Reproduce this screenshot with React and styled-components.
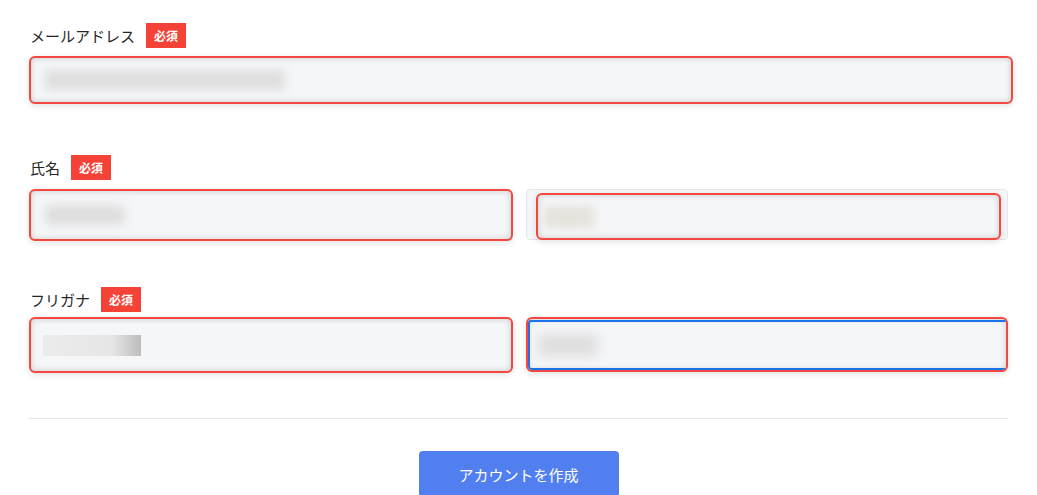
import React from 'react';
import styled, { createGlobalStyle } from 'styled-components';

const GlobalStyle = createGlobalStyle`
  html, body {
    margin: 0;
    padding: 0;
    background: #ffffff;
    font-family: "Noto Sans CJK JP", "Noto Sans", sans-serif;
    color: #333333;
  }
`;

// styled-components
const Page = styled.div`
  width: 980px;
  padding: 22px 0 0 29px;
  display: flex;
  flex-direction: column;
`;

const Section = styled.div`
  display: flex;
  flex-direction: column;
  gap: ${(p) => p.gap || 8}px;
  margin-bottom: ${(p) => p.mb || 0}px;
`;

const LabelRow = styled.div`
  display: flex;
  align-items: center;
  gap: 11px;
  height: 26px;
`;

const Label = styled.span`
  font-size: 15px;
  color: #262626;
  padding-left: 1px;
`;

const Badge = styled.span`
  display: inline-flex;
  align-items: center;
  justify-content: center;
  width: 40px;
  height: 25px;
  background: #f44336;
  color: #ffffff;
  font-size: 12px;
  font-weight: 700;
`;

const Row = styled.div`
  display: grid;
  grid-template-columns: 484px 482px;
  gap: 13px;
`;

const Field = styled.div`
  position: relative;
  box-sizing: border-box;
  height: ${(p) => p.h}px;
  width: ${(p) => p.w || '100%'};
  border: 2px solid #f4473f;
  border-radius: 6px;
  background: #f5f6f8;
  box-shadow: inset 0 0 6px rgba(0, 0, 0, 0.18), 0 2px 6px rgba(0, 0, 0, 0.12);
  display: flex;
  align-items: center;
  padding-left: ${(p) => p.pl || 12}px;
  overflow: hidden;
`;

const FocusedField = styled(Field)`
  &::after {
    content: '';
    position: absolute;
    inset: 1px -2px 0 0;
    border-top: 2px solid #1a73e8;
    border-bottom: 2px solid #1a73e8;
    border-left: 2px solid #1a73e8;
    border-radius: 3px;
    pointer-events: none;
  }
`;

const Frame = styled.div`
  box-sizing: border-box;
  height: 51px;
  border: 1px solid #e4e6ea;
  border-radius: 4px;
  background: #f5f6f8;
  padding: 3px 6px 0 9px;
`;

const Blur = styled.div`
  width: ${(p) => p.w}px;
  height: ${(p) => p.h}px;
  background: ${(p) => p.tone || '#dedede'};
  filter: blur(${(p) => p.blur || 5}px);
  border-radius: 4px;
`;

const Sharp = styled.div`
  width: ${(p) => p.w}px;
  height: ${(p) => p.h}px;
  background: linear-gradient(90deg, #ececec 0%, #e6e6e6 70%, #bdbdbd 100%);
`;

const Divider = styled.hr`
  width: 979px;
  margin: 45px 0 32px 0;
  border: none;
  border-top: 1px solid #e3e3e3;
`;

const ButtonRow = styled.div`
  display: flex;
  justify-content: center;
  width: 979px;
`;

const SubmitButton = styled.button`
  width: 200px;
  height: 46px;
  border: none;
  border-radius: 4px;
  background: #527ff0;
  color: #ffffff;
  font-family: "Noto Sans CJK JP", "Noto Sans", sans-serif;
  font-size: 15px;
  cursor: pointer;
`;

const App = () => {
  return (
    <>
      <GlobalStyle />
      <Page>
        <Section gap={8} mb={50}>
          <LabelRow>
            <Label>メールアドレス</Label>
            <Badge>必須</Badge>
          </LabelRow>
          <Field h={48} w="984px" pl={14}>
            <Blur w={240} h={20} />
          </Field>
        </Section>

        <Section gap={9} mb={45}>
          <LabelRow>
            <Label>氏名</Label>
            <Badge>必須</Badge>
          </LabelRow>
          <Row>
            <Field h={52} pl={14}>
              <Blur w={80} h={20} />
            </Field>
            <Frame>
              <Field h={47} pl={6} w="465px">
                <Blur w={50} h={22} tone="#e6e2dc" blur={4} />
              </Field>
            </Frame>
          </Row>
        </Section>

        <Section gap={5}>
          <LabelRow>
            <Label>フリガナ</Label>
            <Badge>必須</Badge>
          </LabelRow>
          <Row>
            <Field h={56} pl={12}>
              <Sharp w={98} h={21} />
            </Field>
            <FocusedField h={55} pl={10}>
              <Blur w={60} h={22} blur={6} />
            </FocusedField>
          </Row>
        </Section>

        <Divider />
        <ButtonRow>
          <SubmitButton>アカウントを作成</SubmitButton>
        </ButtonRow>
      </Page>
    </>
  );
};

export default App;
